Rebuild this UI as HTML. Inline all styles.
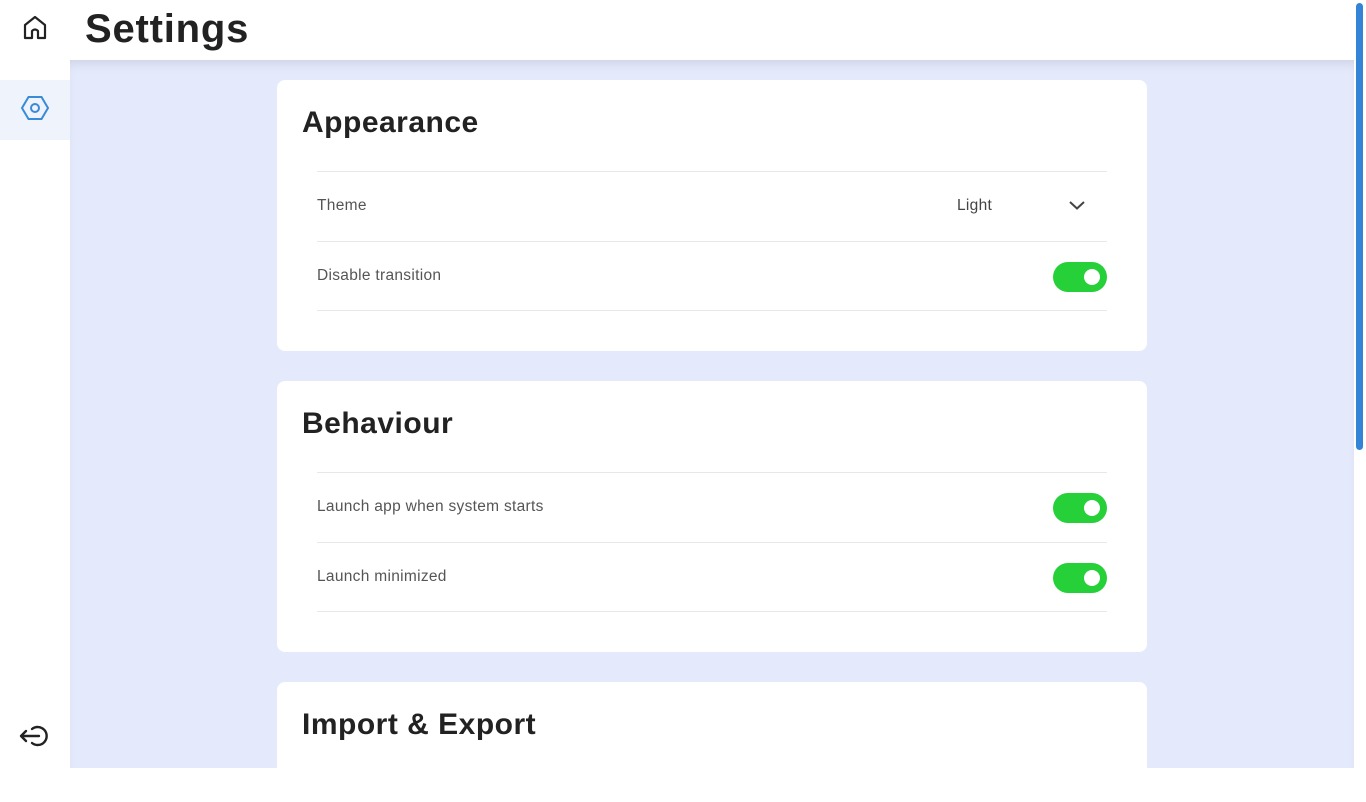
<!DOCTYPE html>
<html><head><meta charset="utf-8"><style>
*{box-sizing:border-box;margin:0;padding:0}
body{width:1366px;height:768px;overflow:hidden;background:#fff;font-family:"Liberation Sans",sans-serif;position:relative}
.side{position:absolute;left:0;top:0;width:70px;height:768px;background:#fff}
.act{position:absolute;left:0;top:80px;width:70px;height:60px;background:#eef3fc}
.main{position:absolute;left:70px;top:60px;width:1284px;height:708px;background:#e4eafc;box-shadow:inset 0 8px 12px -6px rgba(0,0,0,.12)}
.head{position:absolute;left:70px;top:0;width:1284px;height:60px;background:#fff}
.head h1{position:absolute;left:15px;top:7px;font-size:40px;font-weight:bold;color:#222;letter-spacing:.8px}
.card{position:absolute;left:277px;width:870px;background:#fff;border-radius:8px}
.card h2{position:absolute;left:25px;top:26px;font-size:30px;font-weight:bold;color:#222;letter-spacing:.5px}
.row{position:absolute;left:40px;width:790px;height:70px;border-top:1px solid #e8e8e8}
.row.last{border-bottom:1px solid #e8e8e8}
.row span{position:absolute;left:0;top:25px;font-size:15.5px;color:#555;letter-spacing:.3px}
.tg{position:absolute;right:0;top:20px;width:54px;height:30px;border-radius:15px;background:#26d038}
.tg:after{content:"";position:absolute;right:7px;top:7px;width:16px;height:16px;border-radius:50%;background:#fff}
.sb{position:absolute;left:1356px;top:3px;width:7px;height:447px;border-radius:4px;background:#3384d6}
</style></head><body>
<div class="main"></div>
<div class="side"><div class="act"></div></div>
<svg style="position:absolute;left:22px;top:14px" width="26" height="28" viewBox="0 0 26 28" fill="none" stroke="#222" stroke-width="2.2" stroke-linejoin="round"><path d="M3 11 L13 3 L23 11 V24 H16 V17 Q13 14 10 17 V24 H3 Z"/></svg>
<svg style="position:absolute;left:20px;top:94px" width="30" height="28" viewBox="0 0 30 28" fill="none" stroke="#3a8ad8" stroke-width="2"><path d="M8.5 3 H21.5 L28 14 L21.5 25 H8.5 L2 14 Z"/><circle cx="15" cy="14" r="4"/></svg>
<svg style="position:absolute;left:19px;top:723px" width="32" height="26" viewBox="0 0 32 26" fill="none" stroke="#222" stroke-width="2.4" stroke-linecap="round" stroke-linejoin="round"><path d="M2 13 H20 M7 8 L2 13 L7 18"/><path d="M13 6 A9 9 0 1 1 13 20"/></svg>
<div class="head"><h1>Settings</h1></div>
<div class="card" style="top:80px;height:271px"><h2>Appearance</h2>
<div class="row" style="top:91px"><span>Theme</span><span style="left:640px;color:#444">Light</span>
<svg style="position:absolute;left:751px;top:27px" width="18" height="12" viewBox="0 0 18 12" fill="none" stroke="#444" stroke-width="2"><path d="M2 3 L9 9.5 L16 3"/></svg></div>
<div class="row last" style="top:161px"><span>Disable transition</span><div class="tg"></div></div></div>
<div class="card" style="top:381px;height:271px"><h2>Behaviour</h2>
<div class="row" style="top:91px"><span>Launch app when system starts</span><div class="tg"></div></div>
<div class="row last" style="top:161px"><span>Launch minimized</span><div class="tg"></div></div></div>
<div class="card" style="top:682px;height:120px"><h2>Import &amp; Export</h2></div>
<div class="sb"></div>
</body></html>
